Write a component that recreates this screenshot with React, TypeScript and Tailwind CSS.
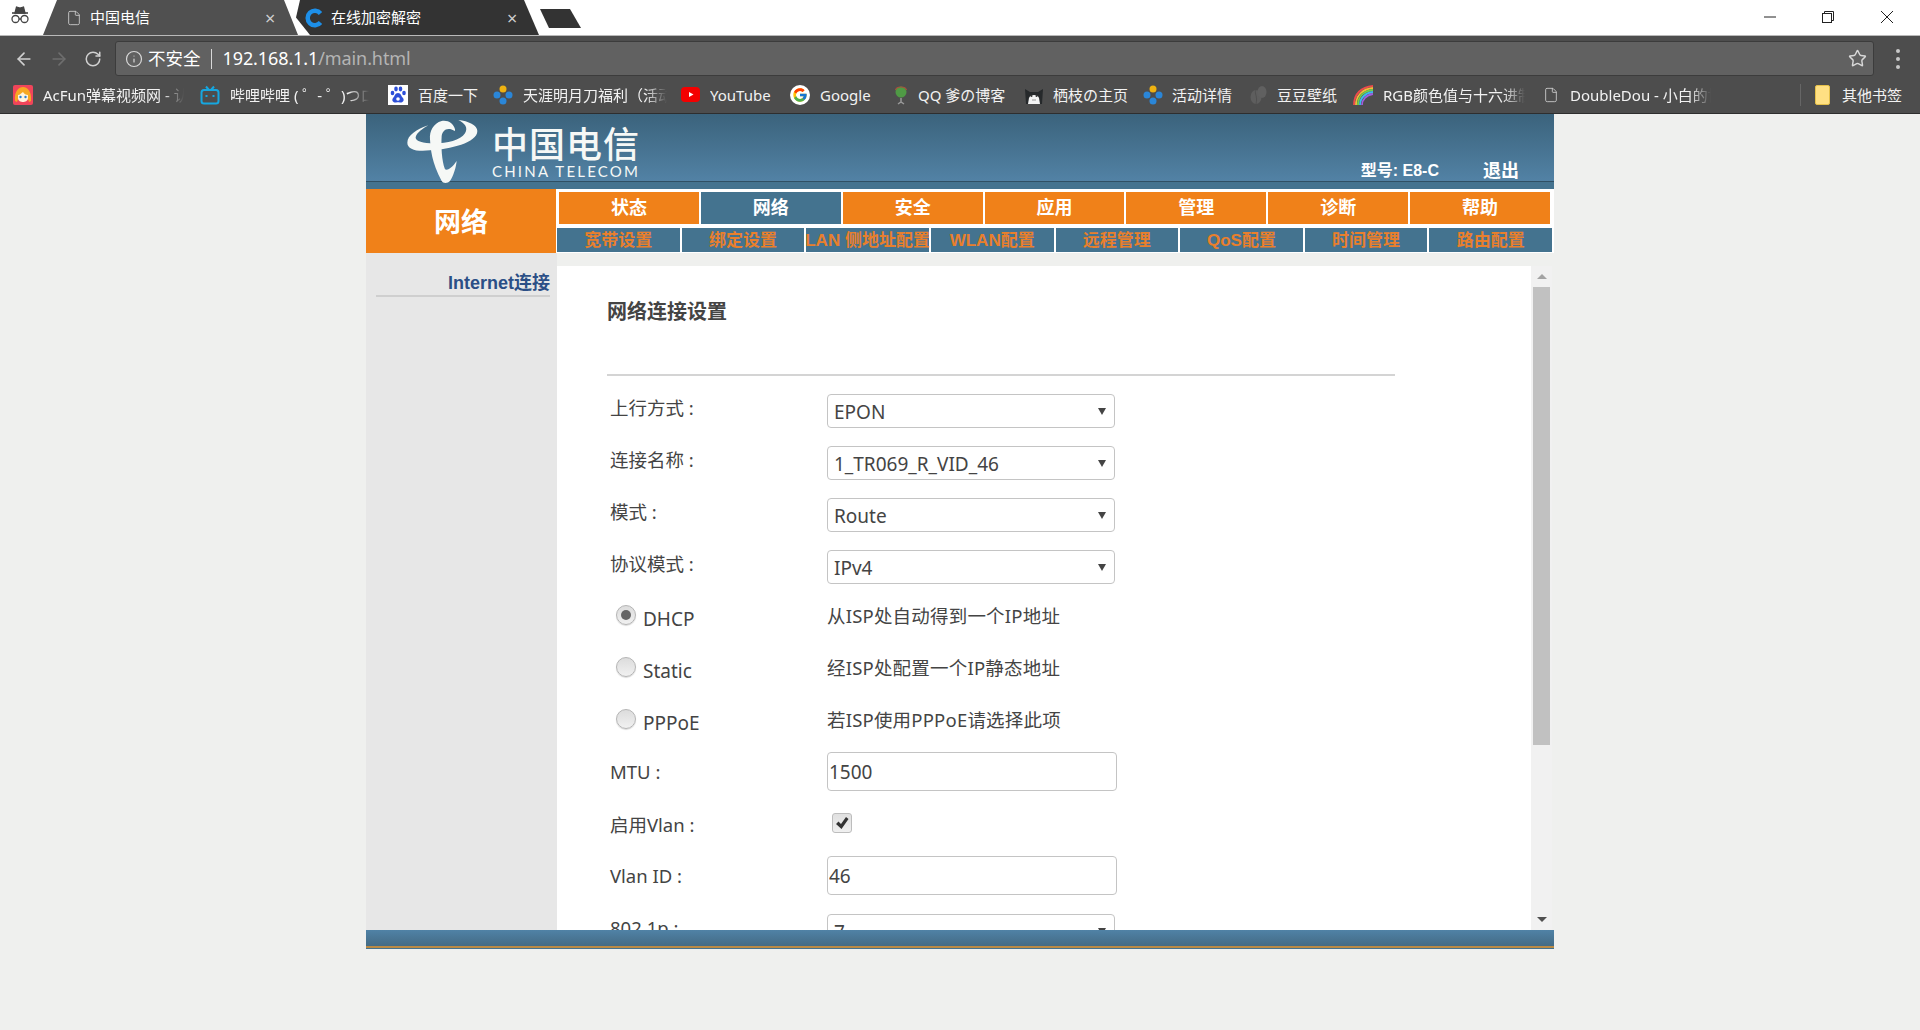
import React from "react";
import { ArrowLeft, ArrowRight, RotateCw, Info, Star, File } from "lucide-react";
import { FcGoogle } from "react-icons/fc";

const AcFunIcon = () => (
  <svg viewBox="0 0 20 20" className="w-5 h-5">
    <rect width="20" height="20" rx="2" fill="#f0455a" />
    <path d="M2 16C1 6 6 2 10 2s9 4 8 14l-2 1-1-3H5l-1 3z" fill="#f7a823" />
    <path d="M5 10c2 0 3-2 5-3 1 2 3 3 5 3v3c0 3-3 4-5 4s-5-1-5-4z" fill="#fff3dc" />
    <circle cx="7.500" cy="12" r="1.200" fill="#2c7fd0" />
    <circle cx="12.500" cy="12" r="1.200" fill="#2c7fd0" />
  </svg>
);

const BiliIcon = () => (
  <svg viewBox="0 0 20 20" className="w-5 h-5" fill="none" stroke="#16a7e0" strokeWidth="2">
    <path d="M6 1.500 9 5M14 1.500 11 5" />
    <rect x="1.500" y="5" width="17" height="13.500" rx="2.500" />
    <path d="M6.500 10v2M13.500 10v2" />
  </svg>
);

const BaiduIcon = () => (
  <svg viewBox="0 0 20 20" className="w-5 h-5">
    <rect width="20" height="20" fill="#fff" />
    <g fill="#2d4fd8">
      <ellipse cx="4.500" cy="8" rx="1.800" ry="2.300" />
      <ellipse cx="8" cy="4" rx="1.800" ry="2.400" />
      <ellipse cx="12.500" cy="4" rx="1.800" ry="2.400" />
      <ellipse cx="16" cy="8" rx="1.800" ry="2.300" />
      <path d="M10 8c-3 0-3 3-5 5-2 3 1 5 3 4.500 1.500-.4 2.500-.4 4 0 2 .5 5-1.500 3-4.500-2-2-2-5-5-5z" />
    </g>
    <circle cx="10" cy="14" r="1.800" fill="#fff" />
  </svg>
);

const DiamondDots = () => (
  <svg viewBox="0 0 20 20" className="w-5 h-5">
    <circle cx="10" cy="4" r="3.500" fill="#eeb211" />
    <circle cx="4" cy="10" r="3.500" fill="#2a86d8" />
    <circle cx="16" cy="10" r="3.500" fill="#2a86d8" />
    <circle cx="10" cy="16" r="3.500" fill="#2a86d8" />
  </svg>
);

const YoutubeIcon = () => (
  <svg viewBox="0 0 20 20" className="w-5 h-5">
    <rect y="2" width="19" height="15" rx="4" fill="#f40000" />
    <path d="M8 7l4.500 2.500L8 12z" fill="#fff" />
  </svg>
);

const GoogleIcon = () => (
  <div className="w-5 h-5 rounded-full bg-white flex items-center justify-center">
    <FcGoogle className="w-4 h-4" />
  </div>
);

const QQIcon = () => (
  <svg viewBox="0 0 20 20" className="w-5 h-5">
    <path d="M10 13v4M7 19l3-2 3 2" stroke="#999" strokeWidth="1.500" fill="none" />
    <circle cx="10" cy="7" r="5.500" fill="#4f9a45" />
    <path d="M4.500 5c1-4 10-4 11 0" stroke="#a8503c" strokeWidth="1.200" fill="none" />
  </svg>
);

const CatIcon = () => (
  <svg viewBox="0 0 20 20" className="w-5 h-5">
    <path d="M2 19 1 4l5 3h8l5-3-1 15z" fill="#26292b" />
    <path d="M4 19l1-6c1-4 9-4 10 0l1 6z" fill="#f4f4f4" />
    <circle cx="7.500" cy="11" r="1" fill="#333" />
    <circle cx="12.500" cy="11" r="1" fill="#333" />
    <path d="M8 15h4" stroke="#999" />
  </svg>
);

const BeanIcon = () => (
  <svg viewBox="0 0 20 20" className="w-5 h-5">
    <ellipse cx="8" cy="12" rx="5.500" ry="7" fill="#5e5e5e" />
    <ellipse cx="14" cy="7" rx="4.500" ry="6" fill="#606060" />
    <path d="M8 5c-2 4 2 6 0 14" stroke="#505050" fill="none" />
  </svg>
);

const RainbowIcon = () => (
  <svg viewBox="0 0 20 20" className="w-5 h-5" fill="none" strokeWidth="1.800">
    <path d="M1 20C1 9 8 2 20 1" stroke="#ef4b4b" />
    <path d="M3 20C3 11 9 4 20 3" stroke="#f5b93b" />
    <path d="M5 20C5 12 10 6 20 5" stroke="#6fd04a" />
    <path d="M7 20C7 13 12 8 20 7" stroke="#3fb7ee" />
    <path d="M9 20C9 15 13 10 20 9" stroke="#a05ce0" />
  </svg>
);

const bookmarks = [
  { icon: <AcFunIcon />, label: "AcFun弹幕视频网 - 认真你就输啦", width: "w-[187px]", pad: "pr-[16px]", gap: "ml-[10px]", fade: true },
  { icon: <BiliIcon />, label: "哔哩哔哩 ( ゜- ゜)つロ 干杯~-bilibili", width: "w-[188px]", pad: "pr-[19px]", gap: "ml-[10px]", fade: true },
  { icon: <BaiduIcon />, label: "百度一下", width: "w-[105px]", pad: "pr-[10px]", gap: "ml-[10px]", fade: false },
  { icon: <DiamondDots />, label: "天涯明月刀福利（活动详情", width: "w-[188px]", pad: "pr-[14px]", gap: "ml-[10px]", fade: true },
  { icon: <YoutubeIcon />, label: "YouTube", width: "w-[109px]", pad: "pr-[10px]", gap: "ml-[9px]", fade: false },
  { icon: <GoogleIcon />, label: "Google", width: "w-[101px]", pad: "pr-[10px]", gap: "ml-[10px]", fade: false },
  { icon: <QQIcon />, label: "QQ 爹の博客", width: "w-[133px]", pad: "pr-[10px]", gap: "ml-[7px]", fade: false },
  { icon: <CatIcon />, label: "栖枝の主页", width: "w-[119px]", pad: "pr-[10px]", gap: "ml-[9px]", fade: false },
  { icon: <DiamondDots />, label: "活动详情", width: "w-[105px]", pad: "pr-[5px]", gap: "ml-[9px]", fade: false },
  { icon: <BeanIcon />, label: "豆豆壁纸", width: "w-[105px]", pad: "pr-[5px]", gap: "ml-[9px]", fade: false },
  { icon: <RainbowIcon />, label: "RGB颜色值与十六进制转换", width: "w-[190px]", pad: "pr-[18px]", gap: "ml-[10px]", fade: true },
];

const topTabs = ["状态", "网络", "安全", "应用", "管理", "诊断", "帮助"];
const subTabs = ["宽带设置", "绑定设置", "LAN 侧地址配置", "WLAN配置", "远程管理", "QoS配置", "时间管理", "路由配置"];

function BrowserChrome() {
  return (
    <div className="font-['Noto_Sans','Noto_Sans_CJK_SC',sans-serif]">
      {/* Tab strip */}
      <div className="relative flex h-[35px] bg-white">
        <svg viewBox="0 0 20 20" className="absolute left-[10px] top-[5px] w-[20px] h-[20px]" fill="none" stroke="#444" strokeWidth="1.300">
          <path d="M2 8h16" strokeWidth="1.600" />
          <path d="M5 8l1.500-6 3.500 1 3.500-1L15 8z" fill="#444" />
          <circle cx="5.500" cy="14" r="3.500" />
          <circle cx="14.500" cy="14" r="3.500" />
          <path d="M9 14h2" />
        </svg>
        <div className="ml-[43px] w-[255px] h-[35px] bg-[#505050] [clip-path:polygon(14px_0,241px_0,100%_100%,0_100%)] flex items-center pl-[23px] text-[15px] text-white">
          <File className="w-[16px] h-[18px] text-[#cfcfcf]" strokeWidth={1.300} />
          <span className="ml-[8px] w-[175px]">中国电信</span>
          <span className="text-[#cfcfcf] text-[18px] leading-none">×</span>
        </div>
        <div className="-ml-[2px] w-[243px] h-[35px] bg-[#333333] [clip-path:polygon(4px_0,228px_0,100%_100%,14px_100%,0_50%)] flex items-center pl-[9px] text-[15px] text-white">
          <svg viewBox="0 0 20 20" className="w-[20px] h-[20px]" fill="none" stroke="#1d8fe8" strokeWidth="4.500">
            <path d="M15.500 5.500a7.200 7.200 0 1 0 0 9" />
          </svg>
          <span className="ml-[6px] w-[176px]">在线加密解密</span>
          <span className="text-[#cfcfcf] text-[18px] leading-none">×</span>
        </div>
        <div className="ml-[1px] mt-[9px] w-[41px] h-[19px] bg-[#333333] [clip-path:polygon(0_0,30px_0,100%_100%,9px_100%)]" />
        <div className="ml-auto flex text-[#222]">
          <div className="w-[58px] flex justify-start">
            <svg viewBox="0 0 14 14" className="mt-[10px] w-[14px] h-[14px]" stroke="#222" strokeWidth="1">
              <path d="M1 7h12" />
            </svg>
          </div>
          <div className="w-[59px] flex justify-start">
            <svg viewBox="0 0 14 14" className="mt-[10px] w-[14px] h-[14px]" fill="none" stroke="#222" strokeWidth="1">
              <rect x="1.500" y="3.500" width="9" height="9" />
              <path d="M3.500 3.500v-2h9v9h-2" />
            </svg>
          </div>
          <div className="w-[40px] flex justify-start">
            <svg viewBox="0 0 14 14" className="mt-[10px] w-[14px] h-[14px]" stroke="#222" strokeWidth="1">
              <path d="M1 1l12 12M13 1L1 13" />
            </svg>
          </div>
        </div>
      </div>
      <div className="h-px bg-[#b9b9b9]" />
      {/* Toolbar */}
      <div className="flex items-center h-[41px] bg-[#4d4d4d] pt-[4px] pl-[14px] pr-[14px]">
        <ArrowLeft className="w-[20px] h-[20px] text-[#d0d0d0]" strokeWidth={2} />
        <ArrowRight className="ml-[15px] w-[20px] h-[20px] text-[#6e6e6e]" strokeWidth={2} />
        <RotateCw className="ml-[15px] w-[18px] h-[18px] text-[#d0d0d0]" strokeWidth={2} />
        <div className="ml-[13px] w-[1759px] h-[35px] bg-[#616161] border border-[#3c3c3c] rounded-[3px] flex items-center pl-[9px] pr-[6px] text-white">
          <Info className="w-[18px] h-[18px] text-[#d8d8d8]" strokeWidth={1.600} />
          <span className="ml-[5px] text-[17.500px]">不安全</span>
          <span className="ml-[10px] w-px h-[20px] bg-[#d8d8d8]" />
          <span className="ml-[11px] text-[18px] tracking-[-0.100px]">
            192.168.1.1<span className="text-[#b4b4b4]">/main.html</span>
          </span>
          <Star className="ml-auto w-[19px] h-[19px] text-[#d8d8d8]" strokeWidth={1.800} />
        </div>
        <div className="ml-[22px] flex flex-col gap-[4px]">
          <span className="w-[4px] h-[4px] rounded-full bg-[#c8c8c8]" />
          <span className="w-[4px] h-[4px] rounded-full bg-[#c8c8c8]" />
          <span className="w-[4px] h-[4px] rounded-full bg-[#c8c8c8]" />
        </div>
      </div>
      {/* Bookmarks */}
      <div className="flex items-center h-[37px] bg-[#4d4d4d] pl-[13px] text-[15px] text-[#f2f2f2] border-b border-[#2e2e2e]">
        {bookmarks.map((b) => (
          <div key={b.label} className={`flex items-center ${b.width} ${b.pad}`}>
            <span className="w-[20px] h-[20px] shrink-0">{b.icon}</span>
            <span
              className={
                b.fade
                  ? `${b.gap} overflow-hidden whitespace-nowrap flex-1 [mask-image:linear-gradient(to_right,black_85%,transparent)]`
                  : `${b.gap} overflow-hidden whitespace-nowrap flex-1`
              }
            >
              {b.label}
            </span>
          </div>
        ))}
        <File className="w-[16px] h-[20px] text-[#cfcfcf]" strokeWidth={1.300} />
        <span className="ml-[11px] w-[141px] overflow-hidden whitespace-nowrap [mask-image:linear-gradient(to_right,black_85%,transparent)]">
          DoubleDou - 小白的博客
        </span>
        <span className="ml-[89px] w-px h-[22px] bg-[#666]" />
        <span className="ml-[14px] w-[15px] h-[20px] rounded-[2px] bg-[#ffe083] border border-[#e5c04a]" />
        <span className="ml-[12px]">其他书签</span>
      </div>
    </div>
  );
}

function Select({ value }: { value: string }) {
  return (
    <div className="relative w-[288px] h-[34px] shrink-0 border border-[#c4c4c4] rounded-[4px] bg-white pl-[6px] pt-[1px] text-[19px] leading-[32px] text-[#444]">
      {value}
      <svg viewBox="0 0 8 8" className="absolute right-[8px] top-[12px] w-[8px] h-[8px]" fill="#444">
        <path d="M0 1h8L4 8z" />
      </svg>
    </div>
  );
}

function TextInput({ value }: { value: string }) {
  return (
    <input
      readOnly
      value={value}
      className="w-[290px] h-[39px] shrink-0 border border-[#c4c4c4] rounded-[4px] bg-white pl-[1px] text-[19px] text-[#444] outline-none"
    />
  );
}

function Radio({ checked }: { checked?: boolean }) {
  return (
    <span className="w-[20px] h-[20px] rounded-full border border-[#b5b5b5] bg-gradient-to-b from-[#dcdcdc] to-[#f1f1f1] shadow-[0_1px_1px_rgba(0,0,0,0.15)] flex items-center justify-center">
      {checked && <span className="w-[10px] h-[10px] rounded-full bg-[#666]" />}
    </span>
  );
}

function SelectRow({ label, value }: { label: string; value: string }) {
  return (
    <div className="flex items-center">
      <span className="w-[220px] pl-[3px] mb-[6px]">{label}</span>
      <Select value={value} />
    </div>
  );
}

function InputRow({ label, value }: { label: string; value: string }) {
  return (
    <div className="flex items-center">
      <span className="w-[220px] pl-[3px]">{label}</span>
      <TextInput value={value} />
    </div>
  );
}

function RadioRow({ label, desc, checked }: { label: string; desc: string; checked?: boolean }) {
  return (
    <div className="flex items-center h-[34px]">
      <div className="w-[220px] flex items-center pl-[9px] text-[19px]">
        <span className="mb-[8px]">
          <Radio checked={checked} />
        </span>
        <span className="ml-[7px]">{label}</span>
      </div>
      <span className="mb-[6px] tracking-[0.200px]">{desc}</span>
    </div>
  );
}

function RouterPage() {
  return (
    <div className="mx-auto w-[1188px] font-['Liberation_Sans','Noto_Sans_CJK_SC',sans-serif]">
      {/* Header */}
      <div className="h-[75px] bg-[#44738f]">
        <div className="relative flex h-[68px] border-b border-[#2f5064] bg-gradient-to-b from-[#3b637c] to-[#5282a5]">
          <svg viewBox="0 0 270 216" className="ml-[34px] mt-[2px] w-[90px] h-[72px]" fill="#f6f8f6">
            <path d="M85 28C50 40 22 58 22 80c0 20 28 28 68 23 60-3 142-23 142-58 0-17-27-30-57-33 20 10 30 23 20 40-15 23-65 33-105 30-30-2-48-10-42-22 4-10 20-22 37-32z" />
            <path d="M165 40C160 22 145 12 125 15 100 22 88 45 90 70c2 30 5 70 35 125 4 8 18 8 25 0 10-15 18-40 20-60-10 15-25 30-35 25-10-25-12-70-10-100 2-15 15-30 40-15z" />
          </svg>
          <div className="ml-[2px] mt-[8px] text-[#f6f8f6]">
            <div className="font-['Noto_Sans_CJK_SC',sans-serif] text-[36px] leading-[40px] font-medium tracking-[1px]">中国电信</div>
            <div className="mt-[2px] font-['Lato',sans-serif] text-[15px] leading-[14px] tracking-[2.200px]">CHINA TELECOM</div>
          </div>
          <div className="ml-auto flex items-end pr-[35px] font-bold text-white leading-[20px]">
            <span className="text-[16px]">型号: E8-C</span>
            <span className="ml-[44px] text-[18px]">退出</span>
          </div>
        </div>
      </div>
      {/* Section title + nav */}
      <div className="flex h-[64px]">
        <div className="w-[190px] bg-[#f08119] flex items-center justify-center pt-[4px] text-[27px] font-bold text-white">网络</div>
        <div className="flex-1 bg-white flex flex-col">
          <div className="flex gap-[2px] mt-[3px] ml-[3px] mr-[4px] h-[32px]">
            {topTabs.map((t, i) => (
              <div
                key={t}
                className={
                  i === 1
                    ? "flex-1 bg-[#44738f] text-white text-[18px] font-bold flex items-center justify-center"
                    : "flex-1 bg-[#f08119] text-white text-[18px] font-bold flex items-center justify-center"
                }
              >
                {t}
              </div>
            ))}
          </div>
          <div className="flex gap-[2px] mt-[4px] ml-[1px] mr-[2px] h-[24px]">
            {subTabs.map((t) => (
              <div key={t} className="flex-1 min-w-0 bg-[#44738f] text-[#e97f2c] text-[17px] pt-[1px] font-bold flex items-center justify-center whitespace-nowrap">
                {t}
              </div>
            ))}
          </div>
        </div>
      </div>
      {/* Body */}
      <div className="flex h-[677px]">
        <div className="w-[191px] bg-[#e7e7e7] pt-[18px] pl-[10px] pr-[7px]">
          <div className="text-right text-[18px] leading-[24px] font-bold text-[#2b4f86] border-b-2 border-[#cfcfcf]">Internet连接</div>
        </div>
        <div className="flex-1 pt-[13px] pr-[2px]">
          <div className="flex h-[664px]">
            <div className="flex-1 bg-white overflow-hidden pl-[50px] text-[18.500px] text-[#444] font-['Noto_Sans','Noto_Sans_CJK_SC',sans-serif]">
              <h2 className="mt-[32px] text-[20px] leading-[28px] font-bold text-[#444]">网络连接设置</h2>
              <div className="mt-[48px] w-[788px] h-[2px] bg-[#d4d4d4]" />
              <div className="mt-[18px] flex flex-col gap-[18px]">
                <SelectRow label="上行方式 :" value="EPON" />
                <SelectRow label="连接名称 :" value="1_TR069_R_VID_46" />
                <SelectRow label="模式 :" value="Route" />
                <SelectRow label="协议模式 :" value="IPv4" />
                <RadioRow label="DHCP" desc="从ISP处自动得到一个IP地址" checked />
                <RadioRow label="Static" desc="经ISP处配置一个IP静态地址" />
                <RadioRow label="PPPoE" desc="若ISP使用PPPoE请选择此项" />
              </div>
              <div className="mt-[12px]">
                <InputRow label="MTU :" value="1500" />
              </div>
              <div className="mt-[22px] flex items-center h-[20px]">
                <span className="w-[220px] pl-[3px] mt-[3px]">启用Vlan :</span>
                <span className="ml-[5px] w-[20px] h-[20px] rounded-[3px] border border-[#bdbdbd] bg-gradient-to-b from-[#e0e0e0] to-[#f0f0f0] flex items-center justify-center">
                  <svg viewBox="0 0 14 14" className="w-[14px] h-[14px]" fill="#333">
                    <path d="M1 8l2.500-2.500L6 8l5-7 2.500 2L6.500 13z" />
                  </svg>
                </span>
              </div>
              <div className="mt-[23px]">
                <InputRow label="Vlan ID :" value="46" />
              </div>
              <div className="mt-[19px]">
                <SelectRow label="802.1p :" value="7" />
              </div>
            </div>
            {/* Scrollbar */}
            <div className="w-[21px] bg-[#f1f1f1] flex flex-col items-center">
              <div className="h-[21px] flex items-center justify-center">
                <span className="w-0 h-0 border-x-[5px] border-x-transparent border-b-[5px] border-b-[#a3a3a3]" />
              </div>
              <div className="w-[17px] h-[458px] bg-[#c1c1c1]" />
              <div className="mt-auto h-[21px] flex items-center justify-center">
                <span className="w-0 h-0 border-x-[5px] border-x-transparent border-t-[5px] border-t-[#505050]" />
              </div>
            </div>
          </div>
        </div>
      </div>
      {/* Footer bar */}
      <div className="h-[19px] bg-gradient-to-b from-[#5082a6] to-[#41677f] flex flex-col justify-end">
        <div className="h-[2px] bg-[#b98a45]" />
        <div className="h-px bg-[#44738f]" />
      </div>
    </div>
  );
}

export default function App() {
  return (
    <div className="min-h-screen bg-[#eff0ee]">
      <BrowserChrome />
      <RouterPage />
    </div>
  );
}
